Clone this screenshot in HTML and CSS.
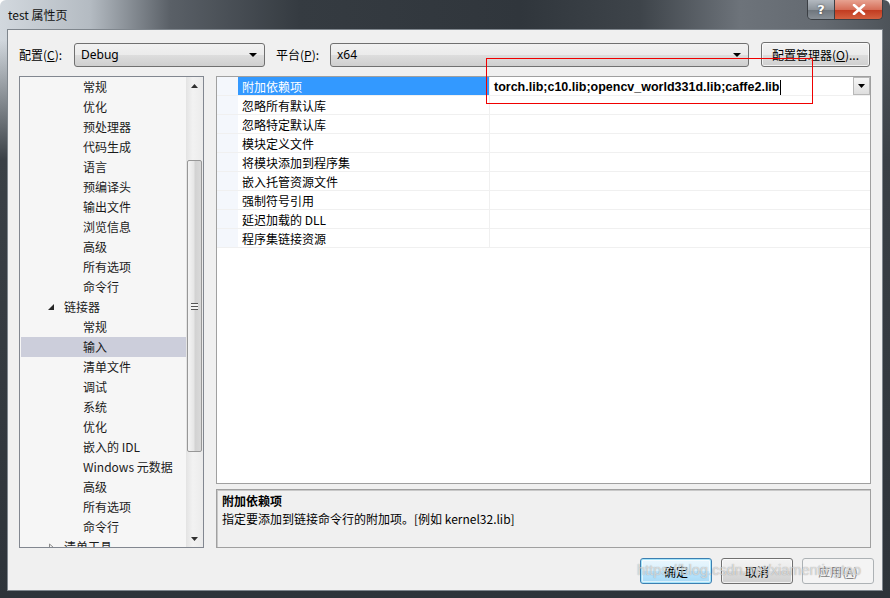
FILE: index.html
```html
<!DOCTYPE html>
<html lang="zh-CN">
<head>
    <meta charset="UTF-8">
    <title>test 属性页</title>
    <link rel="stylesheet" href="styles.css">
</head>
<body>
    <div class="window">
        <div class="titlebar">
            <div class="title">test 属性页</div>
            <div class="caption-buttons">
                <div class="cap-btn help">?</div>
                <div class="cap-btn close">
                    <svg width="14" height="11" viewBox="0 0 14 11"><path d="M2 1 L12 10 M12 1 L2 10" stroke="#fff" stroke-width="2.6" stroke-linecap="round"/></svg>
                </div>
            </div>
        </div>

        <div class="client">
            <div class="top-row">
                <label class="top-label">配置(<u>C</u>):</label>
                <div class="combo config-combo">
                    <span>Debug</span>
                    <span class="combo-arrow"></span>
                </div>
                <label class="top-label platform-label">平台(<u>P</u>):</label>
                <div class="combo platform-combo">
                    <span>x64</span>
                    <span class="combo-arrow"></span>
                </div>
                <button class="win-btn manager-btn">配置管理器(<u>O</u>)...</button>
            </div>

            <div class="main">
                <div class="tree">
                    <div class="tree-list">
                        <div class="tree-item child">常规</div>
                        <div class="tree-item child">优化</div>
                        <div class="tree-item child">预处理器</div>
                        <div class="tree-item child">代码生成</div>
                        <div class="tree-item child">语言</div>
                        <div class="tree-item child">预编译头</div>
                        <div class="tree-item child">输出文件</div>
                        <div class="tree-item child">浏览信息</div>
                        <div class="tree-item child">高级</div>
                        <div class="tree-item child">所有选项</div>
                        <div class="tree-item child">命令行</div>
                        <div class="tree-item parent">
                            <svg class="expander" width="7" height="7" viewBox="0 0 7 7"><path d="M6 0 L6 6 L0 6 Z" fill="#262626"/></svg>
                            链接器
                        </div>
                        <div class="tree-item child">常规</div>
                        <div class="tree-item child selected">输入</div>
                        <div class="tree-item child">清单文件</div>
                        <div class="tree-item child">调试</div>
                        <div class="tree-item child">系统</div>
                        <div class="tree-item child">优化</div>
                        <div class="tree-item child">嵌入的 IDL</div>
                        <div class="tree-item child">Windows 元数据</div>
                        <div class="tree-item child">高级</div>
                        <div class="tree-item child">所有选项</div>
                        <div class="tree-item child">命令行</div>
                        <div class="tree-item parent">
                            <svg class="expander" width="7" height="9" viewBox="0 0 7 9"><path d="M1.5 1 L5.5 4.5 L1.5 8 Z" fill="none" stroke="#8a8a8a"/></svg>
                            清单工具
                        </div>
                    </div>
                    <div class="scrollbar">
                        <div class="sb-arrow">
                            <svg width="7" height="4" viewBox="0 0 7 4"><path d="M0 4 L3.5 0 L7 4 Z" fill="#303030"/></svg>
                        </div>
                        <div class="sb-track top-track"></div>
                        <div class="sb-thumb">
                            <div class="grip"></div>
                        </div>
                        <div class="sb-track"></div>
                        <div class="sb-arrow">
                            <svg width="7" height="4" viewBox="0 0 7 4"><path d="M0 0 L7 0 L3.5 4 Z" fill="#303030"/></svg>
                        </div>
                    </div>
                </div>

                <div class="right">
                    <div class="grid">
                        <div class="grid-row">
                            <div class="margin-col"></div>
                            <div class="name-col active">附加依赖项</div>
                            <div class="value-col">
                                <span class="value-text">torch.lib;c10.lib;opencv_world331d.lib;caffe2.lib</span><span class="caret"></span>
                                <div class="value-drop">
                                    <svg width="7" height="4" viewBox="0 0 7 4"><path d="M0 0 L7 0 L3.5 4 Z" fill="#000"/></svg>
                                </div>
                            </div>
                        </div>
                        <div class="grid-row"><div class="margin-col"></div><div class="name-col">忽略所有默认库</div><div class="value-col"></div></div>
                        <div class="grid-row"><div class="margin-col"></div><div class="name-col">忽略特定默认库</div><div class="value-col"></div></div>
                        <div class="grid-row"><div class="margin-col"></div><div class="name-col">模块定义文件</div><div class="value-col"></div></div>
                        <div class="grid-row"><div class="margin-col"></div><div class="name-col">将模块添加到程序集</div><div class="value-col"></div></div>
                        <div class="grid-row"><div class="margin-col"></div><div class="name-col">嵌入托管资源文件</div><div class="value-col"></div></div>
                        <div class="grid-row"><div class="margin-col"></div><div class="name-col">强制符号引用</div><div class="value-col"></div></div>
                        <div class="grid-row"><div class="margin-col"></div><div class="name-col">延迟加载的 DLL</div><div class="value-col"></div></div>
                        <div class="grid-row"><div class="margin-col"></div><div class="name-col">程序集链接资源</div><div class="value-col"></div></div>
                    </div>
                    <div class="description">
                        <div class="desc-title">附加依赖项</div>
                        <div class="desc-text">指定要添加到链接命令行的附加项。[例如 kernel32.lib]</div>
                    </div>
                </div>
            </div>

            <div class="bottom-row">
                <button class="win-btn dialog-btn default">确定</button>
                <button class="win-btn dialog-btn">取消</button>
                <button class="win-btn dialog-btn" disabled>应用(<u>A</u>)</button>
            </div>

            <div class="highlight-box"></div>
        </div>

        <div class="watermark">https://blog.csdn.net/xiamentingtao</div>
    </div>
</body>
</html>
```

FILE: styles.css
```css
* {
    margin: 0;
    padding: 0;
    box-sizing: border-box;
}

body {
    width: 890px;
    height: 598px;
    overflow: hidden;
    font-family: "Noto Sans", "Noto Sans CJK SC", sans-serif;
    font-size: 12px;
    color: #000;
}

.window {
    position: relative;
    width: 890px;
    height: 598px;
    display: flex;
    flex-direction: column;
    padding: 0 7px 7px 7px;
    background:
        linear-gradient(to bottom, rgba(52, 58, 64, 0) 0, rgba(52, 58, 64, 0) 40px, #3a4046 160px, #2e343a 598px),
        linear-gradient(90deg, #d2d8de 0, #b4bbc2 90px, #5a6067 170px, #353b41 300px, #30363c 520px, #3e444a 640px, #6d737a 740px, #646a71 820px, #4d5359 890px);
    border-radius: 6px 6px 0 0;
}

.titlebar {
    height: 29px;
    display: flex;
    align-items: flex-start;
    margin: 0 -7px;
    padding: 0 7px 0 8px;
}

.title {
    font-family: "Noto Sans CJK SC", sans-serif;
    font-size: 12px;
    line-height: 30px;
    color: #111;
}

.caption-buttons {
    margin-left: auto;
    display: flex;
    border: 1px solid #3b3f44;
    border-top: none;
    border-radius: 0 0 5px 5px;
    overflow: hidden;
    height: 20px;
}

.cap-btn {
    height: 19px;
    display: flex;
    align-items: center;
    justify-content: center;
}

.help {
    width: 27px;
    background: linear-gradient(#b3b9c0 0, #8d949b 50%, #6d747b 51%, #888f96 100%);
    border-right: 1px solid #3b3f44;
    color: #fff;
    font-family: "DejaVu Sans", sans-serif;
    font-weight: bold;
    font-size: 13px;
    text-shadow: 0 0 2px #333;
}

.close {
    width: 47px;
    background: linear-gradient(#e7a291 0, #d66e58 50%, #c0391f 51%, #d3603f 100%);
}

.client {
    position: relative;
    flex: 1;
    display: flex;
    flex-direction: column;
    background: #f0f0f0;
    border: 1px solid #7f868d;
    padding: 12px 11px 0 11px;
}

.top-row {
    height: 25px;
    display: flex;
    align-items: center;
}

.top-label {
    width: 55px;
    font-family: "Noto Sans CJK SC", sans-serif;
    font-size: 12px;
}

.platform-label {
    width: 54px;
    margin-left: 11px;
}

.combo {
    height: 24px;
    display: flex;
    align-items: center;
    padding: 0 7px 0 6px;
    border: 1px solid #707070;
    border-radius: 3px;
    background: linear-gradient(#f2f2f2 0, #ebebeb 50%, #dddddd 51%, #cfcfcf 100%);
    font-size: 12px;
}

.config-combo {
    width: 191px;
}

.platform-combo {
    width: 419px;
}

.combo-arrow {
    margin-left: auto;
    width: 0;
    height: 0;
    border-left: 4px solid transparent;
    border-right: 4px solid transparent;
    border-top: 4px solid #000;
}

.win-btn {
    font-family: "Noto Sans CJK SC", sans-serif;
    font-size: 12px;
    color: #000;
    border: 1px solid #707070;
    border-radius: 3px;
    background: linear-gradient(#f2f2f2 0, #ebebeb 50%, #dddddd 51%, #cfcfcf 100%);
    box-shadow: inset 0 0 0 1px rgba(255, 255, 255, 0.7);
}

.manager-btn {
    margin-left: 12px;
    width: 109px;
    height: 25px;
}

.main {
    margin-top: 9px;
    height: 472px;
    display: flex;
    gap: 12px;
}

.tree {
    width: 185px;
    display: flex;
    border: 1px solid #828790;
    background: #f6f6f6;
}

.tree-list {
    flex: 1;
    overflow: hidden;
}

.tree-item {
    height: 20px;
    line-height: 20px;
    font-family: "Noto Sans CJK SC", sans-serif;
    font-size: 12px;
    white-space: nowrap;
    color: #1a1a1a;
}

.tree-item.child {
    padding-left: 63px;
}

.tree-item.parent {
    padding-left: 28px;
    display: flex;
    align-items: center;
    gap: 9px;
}

.tree-item.selected {
    background: #cccedb;
    margin-left: 1px;
    padding-left: 62px;
}

.expander {
    display: block;
}

.scrollbar {
    width: 17px;
    display: flex;
    flex-direction: column;
    background: linear-gradient(90deg, #e3e3e3, #f2f2f2 40%, #ebebeb);
}

.sb-arrow {
    height: 17px;
    display: flex;
    align-items: center;
    justify-content: center;
}

.sb-track {
    flex: 1;
}

.top-track {
    flex: 0 0 66px;
}

.sb-thumb {
    height: 292px;
    margin: 0 1px;
    border: 1px solid #979797;
    border-radius: 2px;
    background: linear-gradient(90deg, #f4f4f4 0, #e6e6e6 45%, #d2d2d2 55%, #d9d9d9 100%);
    display: flex;
    align-items: center;
    justify-content: center;
}

.grip {
    width: 7px;
    height: 7px;
    background: repeating-linear-gradient(#555 0, #555 1px, #f4f4f4 1px, #f4f4f4 3px);
}

.right {
    flex: 1;
    display: flex;
    flex-direction: column;
    gap: 5px;
}

.grid {
    height: 408px;
    border: 1px solid #a0a0a0;
    background: #fff;
}

.grid-row {
    height: 19px;
    display: flex;
    border-bottom: 1px solid #f0f0f0;
}

.margin-col {
    width: 21px;
    background: #f4f7fc;
}

.name-col {
    width: 252px;
    padding: 1px 0 0 4px;
    line-height: 18px;
    font-family: "Noto Sans CJK SC", sans-serif;
    font-size: 12px;
    white-space: nowrap;
    border-right: 1px solid #f0f0f0;
}

.name-col.active {
    background: #3399ff;
    color: #fff;
}

.value-col {
    flex: 1;
    display: flex;
    align-items: center;
    padding-left: 4px;
}

.value-text {
    font-family: "Liberation Sans", sans-serif;
    font-weight: bold;
    font-size: 12.5px;
    margin-top: 2px;
}

.caret {
    width: 1px;
    height: 15px;
    margin: 2px 0 0 1px;
    background: #000;
}

.value-drop {
    margin-left: auto;
    width: 17px;
    height: 18px;
    border: 1px solid #b8b8b8;
    background: linear-gradient(#f6f6f6, #dedede);
    display: flex;
    align-items: center;
    justify-content: center;
}

.description {
    height: 59px;
    border: 1px solid #a0a0a0;
    box-shadow: inset 1px 1px 0 #c8c8c8;
    padding: 2px 5px;
    font-family: "Noto Sans CJK SC", sans-serif;
    font-size: 12px;
    line-height: 18px;
}

.desc-title {
    font-weight: bold;
}

.bottom-row {
    margin-top: 10px;
    margin-right: -3px;
    display: flex;
    justify-content: flex-end;
    gap: 9px;
}

.dialog-btn {
    width: 72px;
    height: 26px;
}

.dialog-btn.default {
    border-color: #3c7fb1;
    box-shadow: inset 0 0 0 1px #a5e4fa, inset 0 0 0 2px rgba(255, 255, 255, 0.6);
    background: linear-gradient(#eaf6fd 0, #d9f0fc 50%, #bee6fd 51%, #a7d9f5 100%);
}

.dialog-btn:disabled {
    border-color: #adb2b5;
    background: #f4f4f4;
    color: #838383;
    box-shadow: none;
}

.highlight-box {
    position: absolute;
    left: 478px;
    top: 28px;
    width: 327px;
    height: 46px;
    border: 1px solid #f00000;
}

.watermark {
    position: absolute;
    left: 637px;
    top: 562px;
    font-family: "Liberation Sans", sans-serif;
    font-size: 14.5px;
    color: rgba(255, 255, 255, 0.6);
    text-shadow: 0 0 1px rgba(80, 80, 80, 0.6);
    white-space: nowrap;
}
```
